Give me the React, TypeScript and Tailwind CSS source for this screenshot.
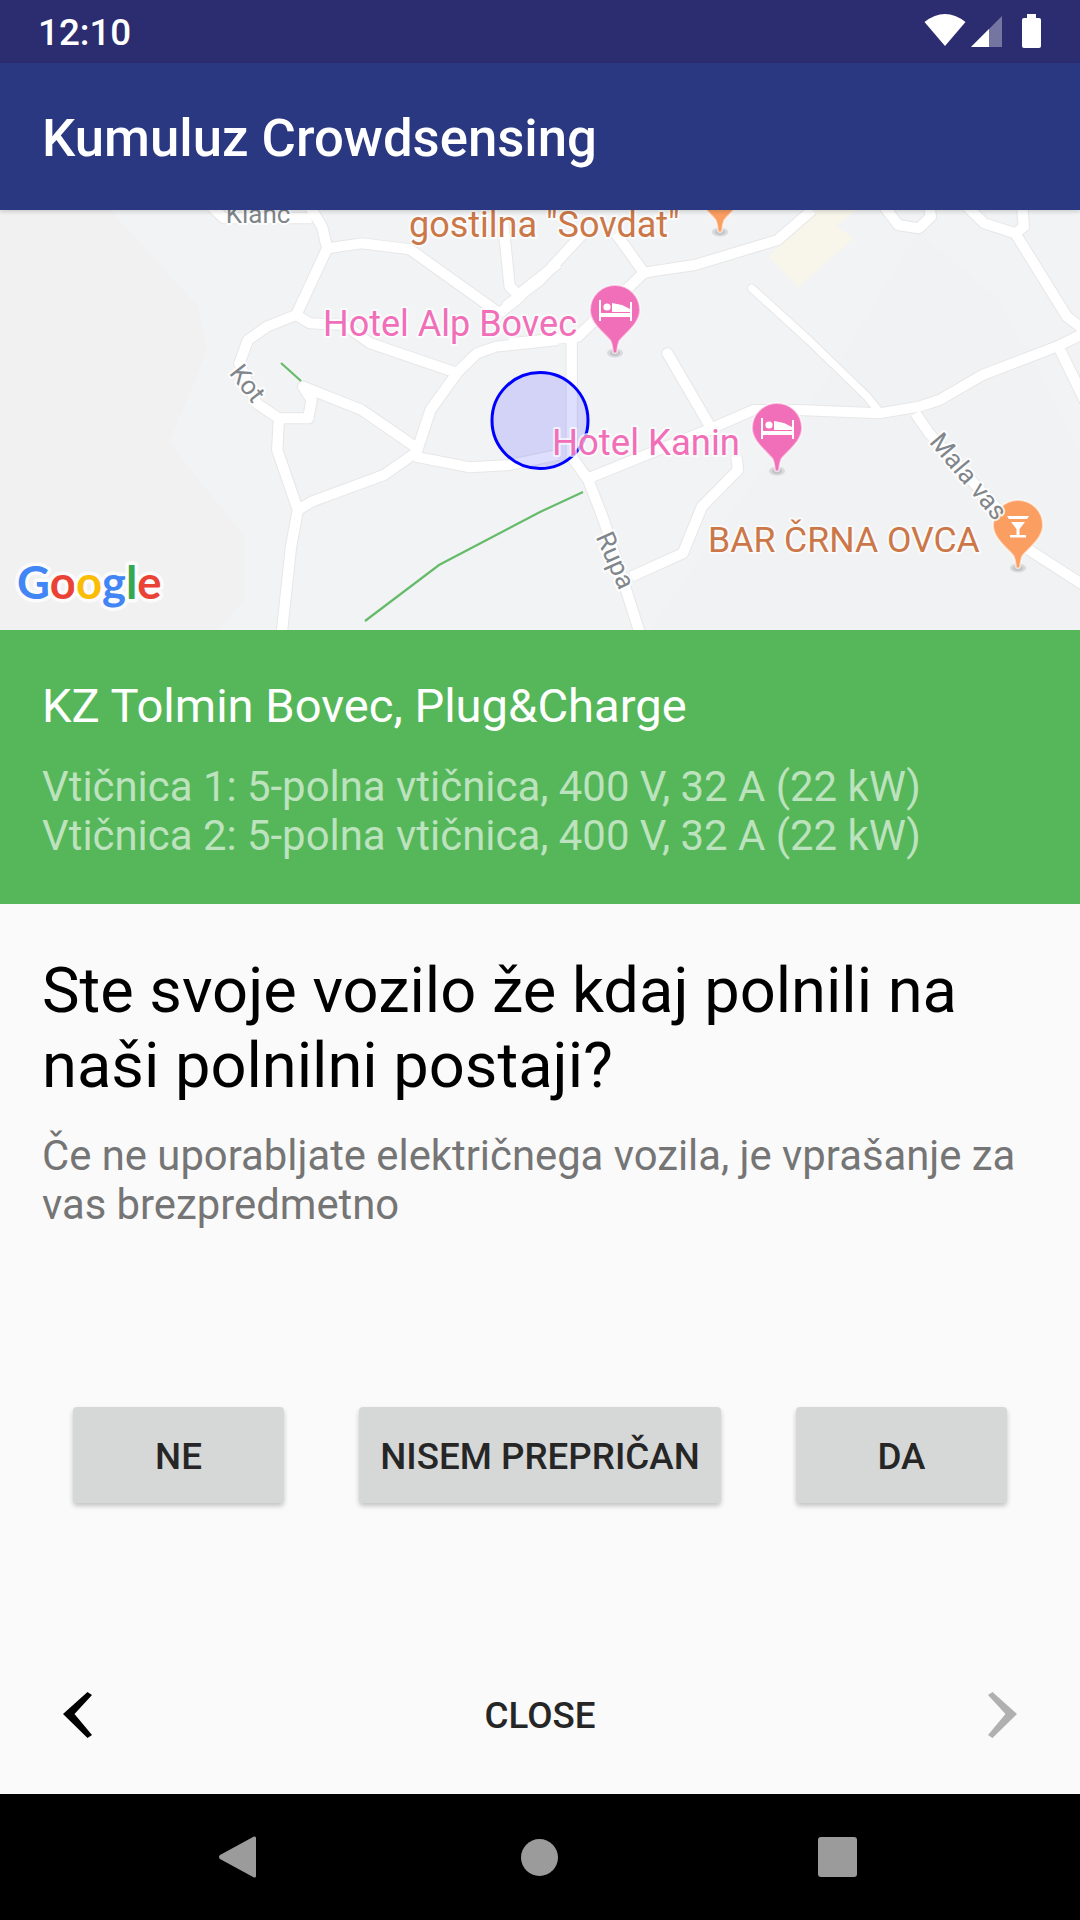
import React from "react";

const LEFT_ROADS = [
  "M900,20 L935,80 L950,145 L860,345 L775,380 L720,420 L695,490 L745,610 L810,655 L895,655 L905,600 L880,560 L1050,630 L1205,740",
  "M810,655 L805,750 L865,930 L845,1040 L818,1300",
  "M865,930 L905,905 L1115,825 L1205,760",
  "M950,145 L1050,130 L1190,148 L1450,340",
  "M860,345 L900,370 L1000,375 L1075,430 L1330,520",
  "M1205,770 L1250,630 L1330,515 L1385,460 L1440,440 L1620,420",
  "M1205,770 L1365,802 L1480,795 L1620,765",
  "M1460,60 L1480,260 L1510,290 L1450,340",
  "M1510,280 L1620,190",
  "M615,20 L650,55 L905,55",
];

const RIGHT_ROADS = [
  "M92,420 L92,770 L140,840 L185,960 L290,1300",
  "M-90,430 L110,410 L300,220 L320,215 L450,195 L690,120 L790,30",
  "M130,95 L0,240 L-100,320",
  "M220,100 L300,215",
  "M140,835 L510,680 L620,630 L750,630 L985,640 L1100,620 L1160,600 L1285,525 L1500,440 L1600,390",
  "M1090,640 L1130,700 L1260,850 L1340,940 L1420,1050 L1600,1170",
  "M570,770 L575,810 L470,920 L415,1060 L265,1130",
  "M1380,100 L1530,350 L1600,405",
  "M1510,450 L1600,640",
  "M1000,20 L1040,75 L1100,85 L1135,50 L1130,20",
  "M1240,20 L1290,70 L1380,100 L1405,80 L1400,20",
];

const LEFT_T = "translate(0,200) scale(0.3444,0.3333)";
const RIGHT_T = "translate(540,200) scale(0.3444,0.3333)";

function Roads({ color, w, w2 }: { color: string; w: number; w2: number }) {
  return (
    <g fill="none" stroke={color} strokeLinejoin="round" strokeLinecap="butt">
      <g transform={LEFT_T} strokeWidth={w}>
        {LEFT_ROADS.map((d) => (
          <path key={d} d={d} />
        ))}
      </g>
      <g transform={RIGHT_T} strokeWidth={w}>
        {RIGHT_ROADS.map((d) => (
          <path key={d} d={d} />
        ))}
        <path d="M370,460 L500,690" strokeLinecap="round" />
        <path d="M615,265 L780,420 L950,590 L985,635" strokeWidth={w2} strokeLinecap="round" />
      </g>
    </g>
  );
}

function Pin({ x, y, color, children }: { x: number; y: number; color: string; children?: React.ReactNode }) {
  return (
    <g transform={`translate(${x},${y})`}>
      <ellipse cx="0" cy="43" rx="8" ry="4.5" fill="#000" opacity="0.1" />
      <ellipse cx="0" cy="43" rx="5" ry="3" fill="#000" opacity="0.1" />
      <path
        d="M-25,0 A25,25 0 1 1 25,0 C25,13 12,22 4.5,31 C3,34 2.5,38 2,42.5 Q0,44 -2,42.5 C-2.5,38 -3,34 -4.5,31 C-12,22 -25,13 -25,0Z"
        fill={color}
        stroke="#fff"
        strokeOpacity="0.55"
        strokeWidth="2"
      />
      {children}
    </g>
  );
}

function Bed() {
  return (
    <g fill="#fff">
      <rect x="-16" y="-10" width="2" height="21" />
      <rect x="15" y="-8" width="2" height="19" />
      <rect x="-16" y="3" width="33" height="4" />
      <circle cx="-8" cy="-3" r="3.6" />
      <path d="M-3,-7 L7,-5 L15,-1 L15,2 L-3,2Z" />
    </g>
  );
}

function Martini() {
  return (
    <g fill="#fff">
      <path d="M-11,-9 L11,-9 L9,-6 L-9,-6Z" />
      <path d="M-7,-3 L7,-3 L1.5,4 L1.5,10 L-1.5,10 L-1.5,4Z" />
      <rect x="-8" y="10" width="16" height="2.5" />
    </g>
  );
}

function Label({ x, y, fill, size, children }: { x: number; y: number; fill: string; size: number; children: React.ReactNode }) {
  return (
    <text
      x={x}
      y={y}
      fill={fill}
      fontSize={size}
      stroke="#fff"
      strokeOpacity="0.7"
      strokeWidth="4"
      paintOrder="stroke"
      strokeLinejoin="round"
    >
      {children}
    </text>
  );
}

function RoadLabel({ x, y, a, size, children }: { x: number; y: number; a: number; size: number; children: React.ReactNode }) {
  return (
    <text
      transform={`translate(${x},${y}) rotate(${a})`}
      y={size * 0.36}
      textAnchor="middle"
      fill="#80868b"
      fontSize={size}
      stroke="#fff"
      strokeOpacity="0.85"
      strokeWidth="4"
      paintOrder="stroke"
      strokeLinejoin="round"
    >
      {children}
    </text>
  );
}

function MapView() {
  return (
    <div className="h-[420px] w-full shrink-0 overflow-hidden bg-[#f2f3f5]">
      <svg width="1080" height="420" viewBox="0 210 1080 420" className="block">
        <rect x="0" y="210" width="1080" height="420" fill="#f2f3f5" />
        <path d="M0,210 L110,210 L198,307 L207,350 L169,443 L245,537 L245,600 L217,630 L0,630Z" fill="#f1f1f2" />
        <path d="M918,232 L836,366 L740,500 L650,630 L1080,630 L1080,450 L1000,300Z" fill="#f1f2f3" />
        <path d="M769,257 L809,210 L857,210 L836,226 L854,238 L798,288Z" fill="#f8f5ea" />
        <Roads color="#e7e7e8" w={36} w2={28} />
        <Roads color="#ffffff" w={30} w2={22} />
        <g fill="none" stroke="#66bb6a" strokeWidth="2.2">
          <path d="M281,363 L301,381" />
          <path d="M365,621 L439,565 L540,512 L583,492" />
        </g>
        <circle cx="540" cy="420.5" r="48" fill="#0000ff" fillOpacity="0.13" stroke="#0000ff" strokeWidth="3" />
        <Pin x={615} y={310} color="#f06fb8">
          <Bed />
        </Pin>
        <Pin x={777} y={428} color="#f06fb8">
          <Bed />
        </Pin>
        <Pin x={1018} y={525} color="#fb9e62">
          <Martini />
        </Pin>
        <Pin x={720} y={189} color="#fb9e62" />
        <RoadLabel x={258} y={214} a={0} size={26}>
          Klanc
        </RoadLabel>
        <RoadLabel x={248} y={383} a={52} size={26}>
          Kot
        </RoadLabel>
        <RoadLabel x={616} y={560} a={66} size={26}>
          Rupa
        </RoadLabel>
        <RoadLabel x={969} y={476} a={50} size={26}>
          Mala vas
        </RoadLabel>
        <Label x={409} y={237} fill="#cb7748" size={36}>
          gostilna "Sovdat"
        </Label>
        <Label x={323} y={336} fill="#f06fb8" size={36}>
          Hotel Alp Bovec
        </Label>
        <Label x={552} y={455} fill="#f06fb8" size={36.5}>
          Hotel Kanin
        </Label>
        <Label x={708} y={552} fill="#cb7748" size={35.6}>
          BAR ČRNA OVCA
        </Label>
        <text
          x="17"
          y="599"
          fontSize="45.5"
          fontWeight="700"
          className="font-['Lato',sans-serif]"
          stroke="#fff"
          strokeOpacity="0.8"
          strokeWidth="7"
          paintOrder="stroke"
          strokeLinejoin="round"
        >
          <tspan fill="#4285f4">G</tspan>
          <tspan fill="#ea4335">o</tspan>
          <tspan fill="#fbbc05">o</tspan>
          <tspan fill="#4285f4">g</tspan>
          <tspan fill="#34a853">l</tspan>
          <tspan fill="#ea4335">e</tspan>
        </text>
      </svg>
    </div>
  );
}

function StatusIcons() {
  return (
    <svg width="130" height="63" viewBox="920 0 130 63" className="block">
      <path d="M924.5,22 Q945,6 965.5,22 L945,46Z" fill="#fff" />
      <path d="M971,47 L1002,16 L1002,47Z" fill="#fff" fillOpacity="0.35" />
      <path d="M971,47 L989,29 L989,47Z" fill="#fff" />
      <rect x="1022" y="18" width="19" height="30" rx="2" fill="#fff" />
      <rect x="1027" y="14" width="9" height="5" fill="#fff" />
    </svg>
  );
}

function ActionButton({ w, children }: { w: string; children: React.ReactNode }) {
  return (
    <div
      className={`${w} flex h-[96px] items-center justify-center rounded-[4px] bg-[#d6d7d7] pt-[3px] text-[36.75px] font-medium text-[#262626] shadow-[0_3px_5px_rgba(0,0,0,0.22)]`}
    >
      {children}
    </div>
  );
}

export default function App() {
  return (
    <div className="flex h-[1920px] w-[1080px] flex-col overflow-hidden bg-[#fafafa] font-['Roboto',sans-serif]">
      <div className="flex h-[63px] shrink-0 items-center justify-between bg-[#2c2c70] pl-[38px] pr-[30px] text-white">
        <span className="pt-[4px] text-[36.75px] font-medium leading-none">12:10</span>
        <StatusIcons />
      </div>
      <div className="z-10 flex h-[147px] shrink-0 items-center bg-[#2a3882] pl-[42px] pt-[5px] text-[52.7px] font-medium text-white shadow-[0_2px_4px_rgba(0,0,0,0.15)]">
        Kumuluz Crowdsensing
      </div>
      <MapView />
      <div className="h-[274px] shrink-0 bg-[#55b75a] px-[42px] pt-[48px] text-white">
        <div className="text-[47.15px] leading-[56px]">KZ Tolmin Bovec, Plug&amp;Charge</div>
        <div className="mt-[28px] text-[41.9px] leading-[49px] text-[#bde2be]">
          <div>Vtičnica 1: 5-polna vtičnica, 400 V, 32 A (22 kW)</div>
          <div>Vtičnica 2: 5-polna vtičnica, 400 V, 32 A (22 kW)</div>
        </div>
      </div>
      <div className="flex flex-1 flex-col">
        <div className="px-[42px] pt-[49px]">
          <div className="text-[63.2px] leading-[75px] text-black">
            Ste svoje vozilo že kdaj polnili na naši polnilni postaji?
          </div>
          <div className="mt-[28px] text-[41.8px] leading-[49px] text-[#757575]">
            Če ne uporabljate električnega vozila, je vprašanje za vas brezpredmetno
          </div>
        </div>
        <div className="mt-[178px] flex justify-between px-[73px]">
          <ActionButton w="w-[211px]">NE</ActionButton>
          <ActionButton w="w-[362px]">NISEM PREPRIČAN</ActionButton>
          <ActionButton w="w-[211px]">DA</ActionButton>
        </div>
        <div className="mt-[189px] flex h-[46px] items-center justify-between px-[63px]">
          <svg width="29" height="46" viewBox="0 0 29 46" className="block">
            <path d="M24.5,0 L29,3 L11.5,22 L29,43 L24.5,46 L0,22Z" fill="#000" />
          </svg>
          <span className="pt-[2px] text-[36.75px] font-medium text-[#262626]">CLOSE</span>
          <svg width="29" height="46" viewBox="0 0 29 46" className="block">
            <path d="M4.5,0 L0,3 L17.5,22 L0,43 L4.5,46 L29,22Z" fill="#b0b0b0" />
          </svg>
        </div>
      </div>
      <div className="flex h-[126px] shrink-0 items-center bg-black pl-[219px]">
        <svg width="37" height="42" viewBox="0 0 37 42" className="block">
          <path d="M35,0.5 Q37,0 37,2 L37,40 Q37,42 35,41.5 L1,23 Q-1,21 1,19Z" fill="#9b9b9b" />
        </svg>
        <div className="ml-[265px] h-[37px] w-[37px] rounded-full bg-[#9b9b9b]" />
        <div className="ml-[260px] h-[40px] w-[39px] rounded-[3px] bg-[#9b9b9b]" />
      </div>
    </div>
  );
}
